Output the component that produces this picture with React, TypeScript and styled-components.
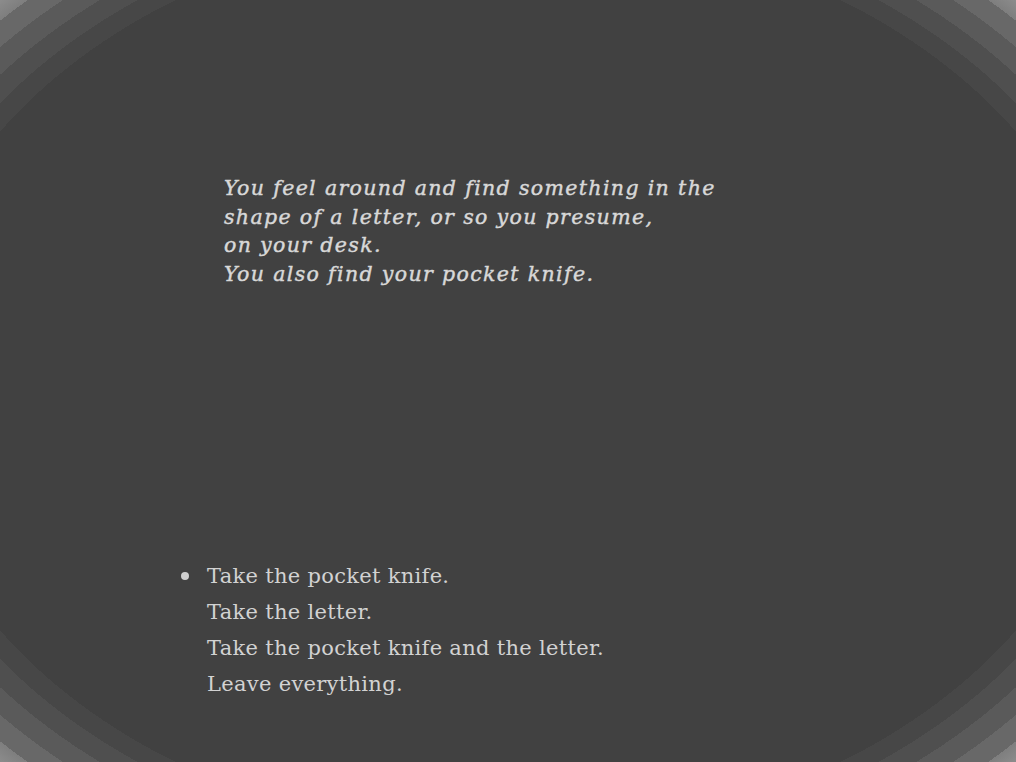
import React from "react";
import styled, { createGlobalStyle } from "styled-components";

const Global = createGlobalStyle`
  html, body { margin: 0; padding: 0; height: 100%; }
  body { background: #404040; }
  #root { height: 100%; }
`;

const Screen = styled.main`
  width: 1016px;
  height: 762px;
  box-sizing: border-box;
  overflow: hidden;
  display: flex;
  flex-direction: column;
  padding: 174px 0 0 0;
  background: radial-gradient(
    ellipse farthest-corner at 50% 50%,
    #414141 0%,
    #414141 84.5%,
    #474747 84.5%,
    #474747 87.5%,
    #4f4f4f 87.5%,
    #4f4f4f 90.7%,
    #5a5a5a 90.7%,
    #5a5a5a 94%,
    #686868 94%,
    #686868 97.3%,
    #7e7e7e 97.3%,
    #8c8c8c 100%
  );
  color: #d4d4d4;
`;

const Narration = styled.p`
  margin: 0 0 0 224px;
  font-family: "DejaVu Serif", "Liberation Serif", serif;
  font-style: italic;
  font-size: 20.5px;
  line-height: 28.5px;
  letter-spacing: 1.35px;
  color: #d8d8d8;
  -webkit-text-stroke: 0.45px #d8d8d8;
  white-space: pre-line;
`;

const Choices = styled.ul`
  margin: 270px 0 0 0;
  padding: 0 0 0 207px;
  list-style: none;
  display: flex;
  flex-direction: column;
`;

const Choice = styled.li<{ $selected?: boolean }>`
  position: relative;
  font-family: "DejaVu Serif", "Liberation Serif", serif;
  font-size: 21px;
  line-height: 36px;
  letter-spacing: 0.3px;
  color: #d2d2d2;
  &::before {
    content: "";
    display: ${(p) => (p.$selected ? "block" : "none")};
    position: absolute;
    left: -26px;
    top: 14px;
    width: 8px;
    height: 8px;
    border-radius: 50%;
    background: #d0d0d0;
  }
`;

const text = `You feel around and find something in the
shape of a letter, or so you presume,
on your desk.
You also find your pocket knife.`;

const options = [
  "Take the pocket knife.",
  "Take the letter.",
  "Take the pocket knife and the letter.",
  "Leave everything.",
];

export default function App() {
  return (
    <>
      <Global />
      <Screen>
        <Narration>{text}</Narration>
        <Choices>
          {options.map((o, i) => (
            <Choice key={o} $selected={i === 0}>
              {o}
            </Choice>
          ))}
        </Choices>
      </Screen>
    </>
  );
}
